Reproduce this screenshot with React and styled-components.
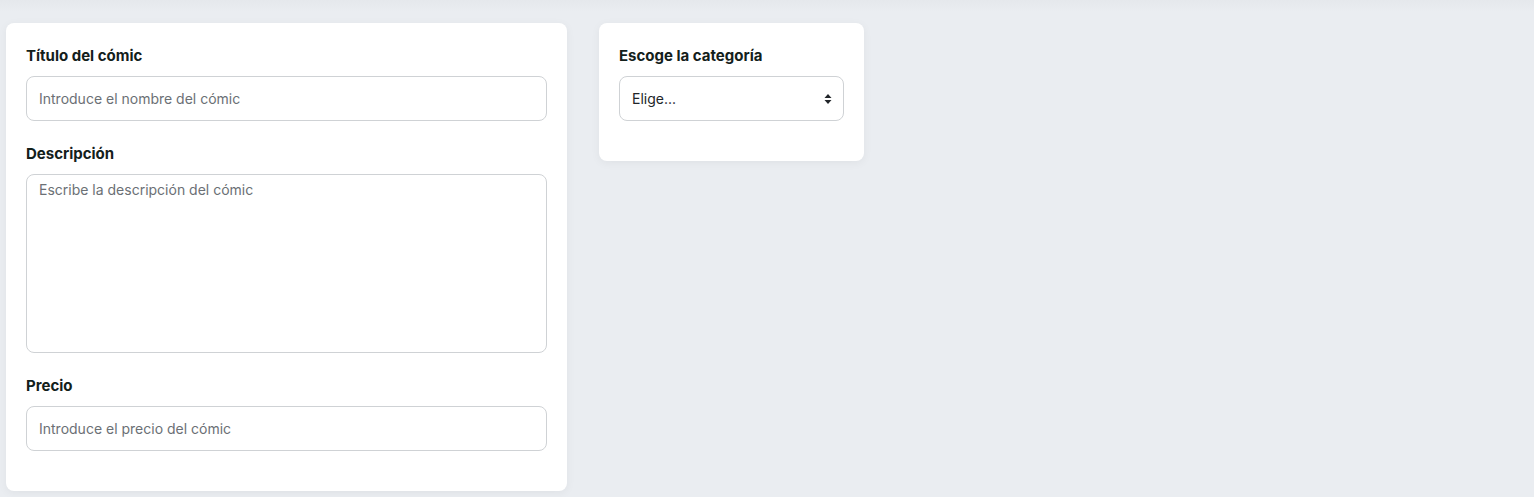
import React, { useState } from 'react'
import styled, { createGlobalStyle } from 'styled-components'

const GlobalStyle = createGlobalStyle`
  html, body {
    margin: 0;
    padding: 0;
    background: #eaedf1;
    font-family: Inter, "Noto Sans", Arial, sans-serif;
  }
`

const Page = styled.div`
  min-height: 497px;
  box-sizing: border-box;
  padding: 23px 6px;
  display: flex;
  align-items: flex-start;
  gap: 32px;
  background: linear-gradient(to bottom, #e5e8ec 0px, #eaedf1 12px);
`

const Card = styled.div`
  width: ${p => p.$width}px;
  box-sizing: border-box;
  background: #fff;
  border-radius: 8px;
  padding: 20px;
  box-shadow: 0 2px 10px rgba(0, 0, 0, 0.05);
`

const Group = styled.div`
  display: flex;
  flex-direction: column;
  margin-bottom: 20px;
`

const Label = styled.label`
  font-size: 15px;
  font-weight: 700;
  color: #13201b;
  line-height: 25px;
  margin-bottom: 8px;
`

const Input = styled.input`
  height: 45px;
  box-sizing: border-box;
  border: 1px solid #cfd2d5;
  border-radius: 8px;
  padding: 0 12px;
  font-family: inherit;
  font-size: 14px;
  color: #212529;
  outline: none;
  &::placeholder { color: #6b7075; }
`

const TextArea = styled.textarea`
  height: 179px;
  box-sizing: border-box;
  border: 1px solid #cfd2d5;
  border-radius: 8px;
  padding: 5px 12px;
  font-family: inherit;
  font-size: 14px;
  line-height: 20px;
  resize: none;
  outline: none;
  &::placeholder { color: #6b7075; }
`

const SelectBox = styled.div`
  height: 45px;
  box-sizing: border-box;
  border: 1px solid #cfd2d5;
  border-radius: 8px;
  display: flex;
  align-items: center;
  justify-content: space-between;
  padding: 0 10px 0 12px;
  font-size: 14px;
  color: #212529;
`

const Arrows = () => (
  <svg width="10" height="14" viewBox="0 0 10 14">
    <path d="M5 2 L8.5 6 H1.5 Z M5 12 L8.5 8 H1.5 Z" fill="#212529" />
  </svg>
)

export default function App() {
  const [title, setTitle] = useState('')
  const [desc, setDesc] = useState('')
  const [price, setPrice] = useState('')

  return (
    <>
      <GlobalStyle />
      <Page>
        <Card $width={561}>
          <Group>
            <Label>Título del cómic</Label>
            <Input value={title} onChange={e => setTitle(e.target.value)} placeholder="Introduce el nombre del cómic" />
          </Group>
          <Group>
            <Label>Descripción</Label>
            <TextArea value={desc} onChange={e => setDesc(e.target.value)} placeholder="Escribe la descripción del cómic" />
          </Group>
          <Group>
            <Label>Precio</Label>
            <Input value={price} onChange={e => setPrice(e.target.value)} placeholder="Introduce el precio del cómic" />
          </Group>
        </Card>
        <Card $width={265}>
          <Group>
            <Label>Escoge la categoría</Label>
            <SelectBox>
              <span>Elige...</span>
              <Arrows />
            </SelectBox>
          </Group>
        </Card>
      </Page>
    </>
  )
}
